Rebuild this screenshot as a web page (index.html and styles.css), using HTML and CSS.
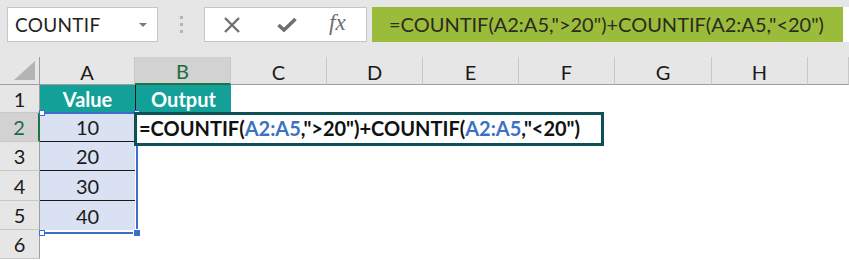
FILE: index.html
```html
<!DOCTYPE html>
<html lang="en">
<head>
    <meta charset="UTF-8">
    <title>COUNTIF</title>
    <link rel="stylesheet" href="styles.css">
</head>
<body>
    <div class="toolbar">
        <div class="namebox">
            <span class="namebox-text">COUNTIF</span>
            <span class="caret"></span>
        </div>
        <div class="grip"><i></i><i></i><i></i></div>
        <div class="fx-buttons">
            <svg class="btn-icon" width="18" height="16" viewBox="0 0 18 16">
                <path d="M2 1 L16 15 M16 1 L2 15" stroke="#707070" stroke-width="2.4" fill="none"/>
            </svg>
            <svg class="btn-icon" width="20" height="15" viewBox="0 0 20 15">
                <path d="M1.5 8 L7 13 L18.5 2" stroke="#707070" stroke-width="3.6" fill="none" stroke-linejoin="miter"/>
            </svg>
            <span class="fx">fx</span>
        </div>
        <div class="formula">
            <span class="formula-text">=COUNTIF(A2:A5,"&gt;20")+COUNTIF(A2:A5,"&lt;20")</span>
        </div>
    </div>

    <div class="sheet">
        <div class="corner"><span class="corner-tri"></span></div>
        <div class="col-head">A</div>
        <div class="col-head active">B</div>
        <div class="col-head">C</div>
        <div class="col-head">D</div>
        <div class="col-head">E</div>
        <div class="col-head">F</div>
        <div class="col-head">G</div>
        <div class="col-head">H</div>
        <div class="col-head"></div>

        <div class="row-head">1</div>
        <div class="cell head-cell">Value</div>
        <div class="cell head-cell output">Output</div>
        <div class="cell"></div><div class="cell"></div><div class="cell"></div><div class="cell"></div><div class="cell"></div><div class="cell"></div><div class="cell"></div>

        <div class="row-head active">2</div>
        <div class="cell value">10</div>
        <div class="cell"></div>
        <div class="cell"></div><div class="cell"></div><div class="cell"></div><div class="cell"></div><div class="cell"></div><div class="cell"></div><div class="cell"></div>

        <div class="row-head">3</div>
        <div class="cell value">20</div>
        <div class="cell"></div>
        <div class="cell"></div><div class="cell"></div><div class="cell"></div><div class="cell"></div><div class="cell"></div><div class="cell"></div><div class="cell"></div>

        <div class="row-head">4</div>
        <div class="cell value">30</div>
        <div class="cell"></div>
        <div class="cell"></div><div class="cell"></div><div class="cell"></div><div class="cell"></div><div class="cell"></div><div class="cell"></div><div class="cell"></div>

        <div class="row-head">5</div>
        <div class="cell value last">40</div>
        <div class="cell"></div>
        <div class="cell"></div><div class="cell"></div><div class="cell"></div><div class="cell"></div><div class="cell"></div><div class="cell"></div><div class="cell"></div>

        <div class="row-head">6</div>
        <div class="cell"></div><div class="cell"></div><div class="cell"></div><div class="cell"></div><div class="cell"></div><div class="cell"></div><div class="cell"></div><div class="cell"></div><div class="cell"></div>

        <!-- reference highlight for A2:A5 -->
        <div class="range-ref">
            <span class="handle tl"></span>
            <span class="handle tr"></span>
            <span class="handle bl"></span>
            <span class="handle br"></span>
        </div>

        <!-- cell B2 in edit mode -->
        <div class="edit-box">=COUNTIF(<span class="ref">A2:A5</span>,"&gt;20")+COUNTIF(<span class="ref">A2:A5</span>,"&lt;20")</div>
    </div>
</body>
</html>
```

FILE: styles.css
```css
body {
    margin: 0;
    background-color: #fff;
    font-family: Lato, "Open Sans", sans-serif;
    width: 849px;
    height: 260px;
    overflow: hidden;
}

/* formula bar */
.toolbar {
    height: 57px;
    box-sizing: border-box;
    padding: 7px 0 0 7px;
    background-color: #e6e6e6;
    display: flex;
    align-items: flex-start;
}

.namebox {
    width: 151px;
    height: 35px;
    box-sizing: border-box;
    background-color: #fff;
    border: 1px solid #c6c6c6;
    display: flex;
    align-items: center;
    justify-content: space-between;
    padding: 0 10px 0 7px;
}

.namebox-text {
    font-size: 19px;
    color: #222;
    letter-spacing: 0.3px;
}

.caret {
    width: 0;
    height: 0;
    border-left: 4px solid transparent;
    border-right: 4px solid transparent;
    border-top: 4px solid #7a7a7a;
}

.grip {
    width: 46px;
    height: 35px;
    display: flex;
    flex-direction: column;
    align-items: center;
    justify-content: center;
    gap: 4px;
}

.grip i {
    width: 3px;
    height: 3px;
    background-color: #b5b5b5;
}

.fx-buttons {
    width: 163px;
    height: 35px;
    box-sizing: border-box;
    background-color: #fff;
    border: 1px solid #c6c6c6;
    display: flex;
    align-items: center;
    padding-left: 18px;
    gap: 36px;
}

.btn-icon {
    display: block;
}

.fx {
    font-family: "Liberation Serif", serif;
    font-style: italic;
    font-size: 23px;
    color: #6e6e6e;
    margin-left: -4px;
    margin-top: -3px;
}

.formula {
    margin-left: 5px;
    flex: 1;
    height: 35px;
    background-color: #fff;
}

.formula-text {
    display: block;
    width: 471px;
    height: 35px;
    box-sizing: border-box;
    background-color: #9bbb3b;
    padding-left: 17px;
    font-size: 20px;
    line-height: 35px;
    color: #2b2b1e;
}

/* worksheet grid */
.sheet {
    position: relative;
    display: grid;
    grid-template-columns: 40px 95px 96px 96px 96px 96px 96px 97px 96px 1fr;
    grid-template-rows: 28px 28px 29px 29px 30px 29px 29px;
    font-size: 20px;
    color: #1a1a1a;
}

.corner {
    background-color: #e6e6e6;
    border-bottom: 1px solid #9e9e9e;
    border-right: 1px solid #9e9e9e;
    position: relative;
}

.corner-tri {
    position: absolute;
    right: 4px;
    bottom: 4px;
    width: 21px;
    height: 19px;
    background-color: #b4b4b4;
    clip-path: polygon(100% 0, 100% 100%, 0 100%);
}

.col-head {
    background-color: #e6e6e6;
    border-right: 1px solid #c8c8c8;
    border-bottom: 1px solid #9e9e9e;
    display: flex;
    align-items: center;
    justify-content: center;
    padding-top: 2px;
}

.col-head.active {
    background-color: #d2d2d2;
    color: #1e6b41;
    border-bottom: 2px solid #217346;
}

.row-head {
    background-color: #e6e6e6;
    border-bottom: 1px solid #c8c8c8;
    border-right: 1px solid #9e9e9e;
    display: flex;
    align-items: center;
    justify-content: center;
}

.row-head.active {
    background-color: #d2d2d2;
    color: #1e6b41;
    border-right: 2px solid #217346;
}

.cell {
    display: flex;
    align-items: center;
    justify-content: center;
}

.head-cell {
    background-color: #13a099;
    color: #fff;
    font-weight: bold;
}

.head-cell.output {
    border-left: 1px solid #1a1a1a;
}

.value {
    background-color: #d9e1f2;
    border-bottom: 1px solid #1a1a1a;
}

.value.last {
    border-bottom: none;
}

.range-ref {
    position: absolute;
    left: 40px;
    top: 55px;
    width: 94px;
    height: 118px;
    border: 2px solid #3b6fc9;
    border-left-color: transparent;
}

.handle {
    position: absolute;
    width: 4px;
    height: 4px;
    background-color: #fff;
    border: 1px solid #3b6fc9;
}

.handle.tl { left: -3px; top: -4px; }
.handle.tr { right: -4px; top: -4px; }
.handle.bl { left: -3px; bottom: -4px; }

.handle.br {
    right: -5px;
    bottom: -5px;
    width: 6px;
    height: 6px;
    background-color: #3b6fc9;
    border-color: #fff;
}

.edit-box {
    position: absolute;
    left: 134px;
    top: 55px;
    width: 470px;
    height: 34px;
    box-sizing: border-box;
    border: 3px solid #0e5056;
    background-color: #fff;
    padding-left: 2px;
    font-weight: bold;
    font-size: 20px;
    line-height: 27px;
    color: #111;
    white-space: nowrap;
}

.edit-box .ref {
    color: #3c72c6;
}
```
